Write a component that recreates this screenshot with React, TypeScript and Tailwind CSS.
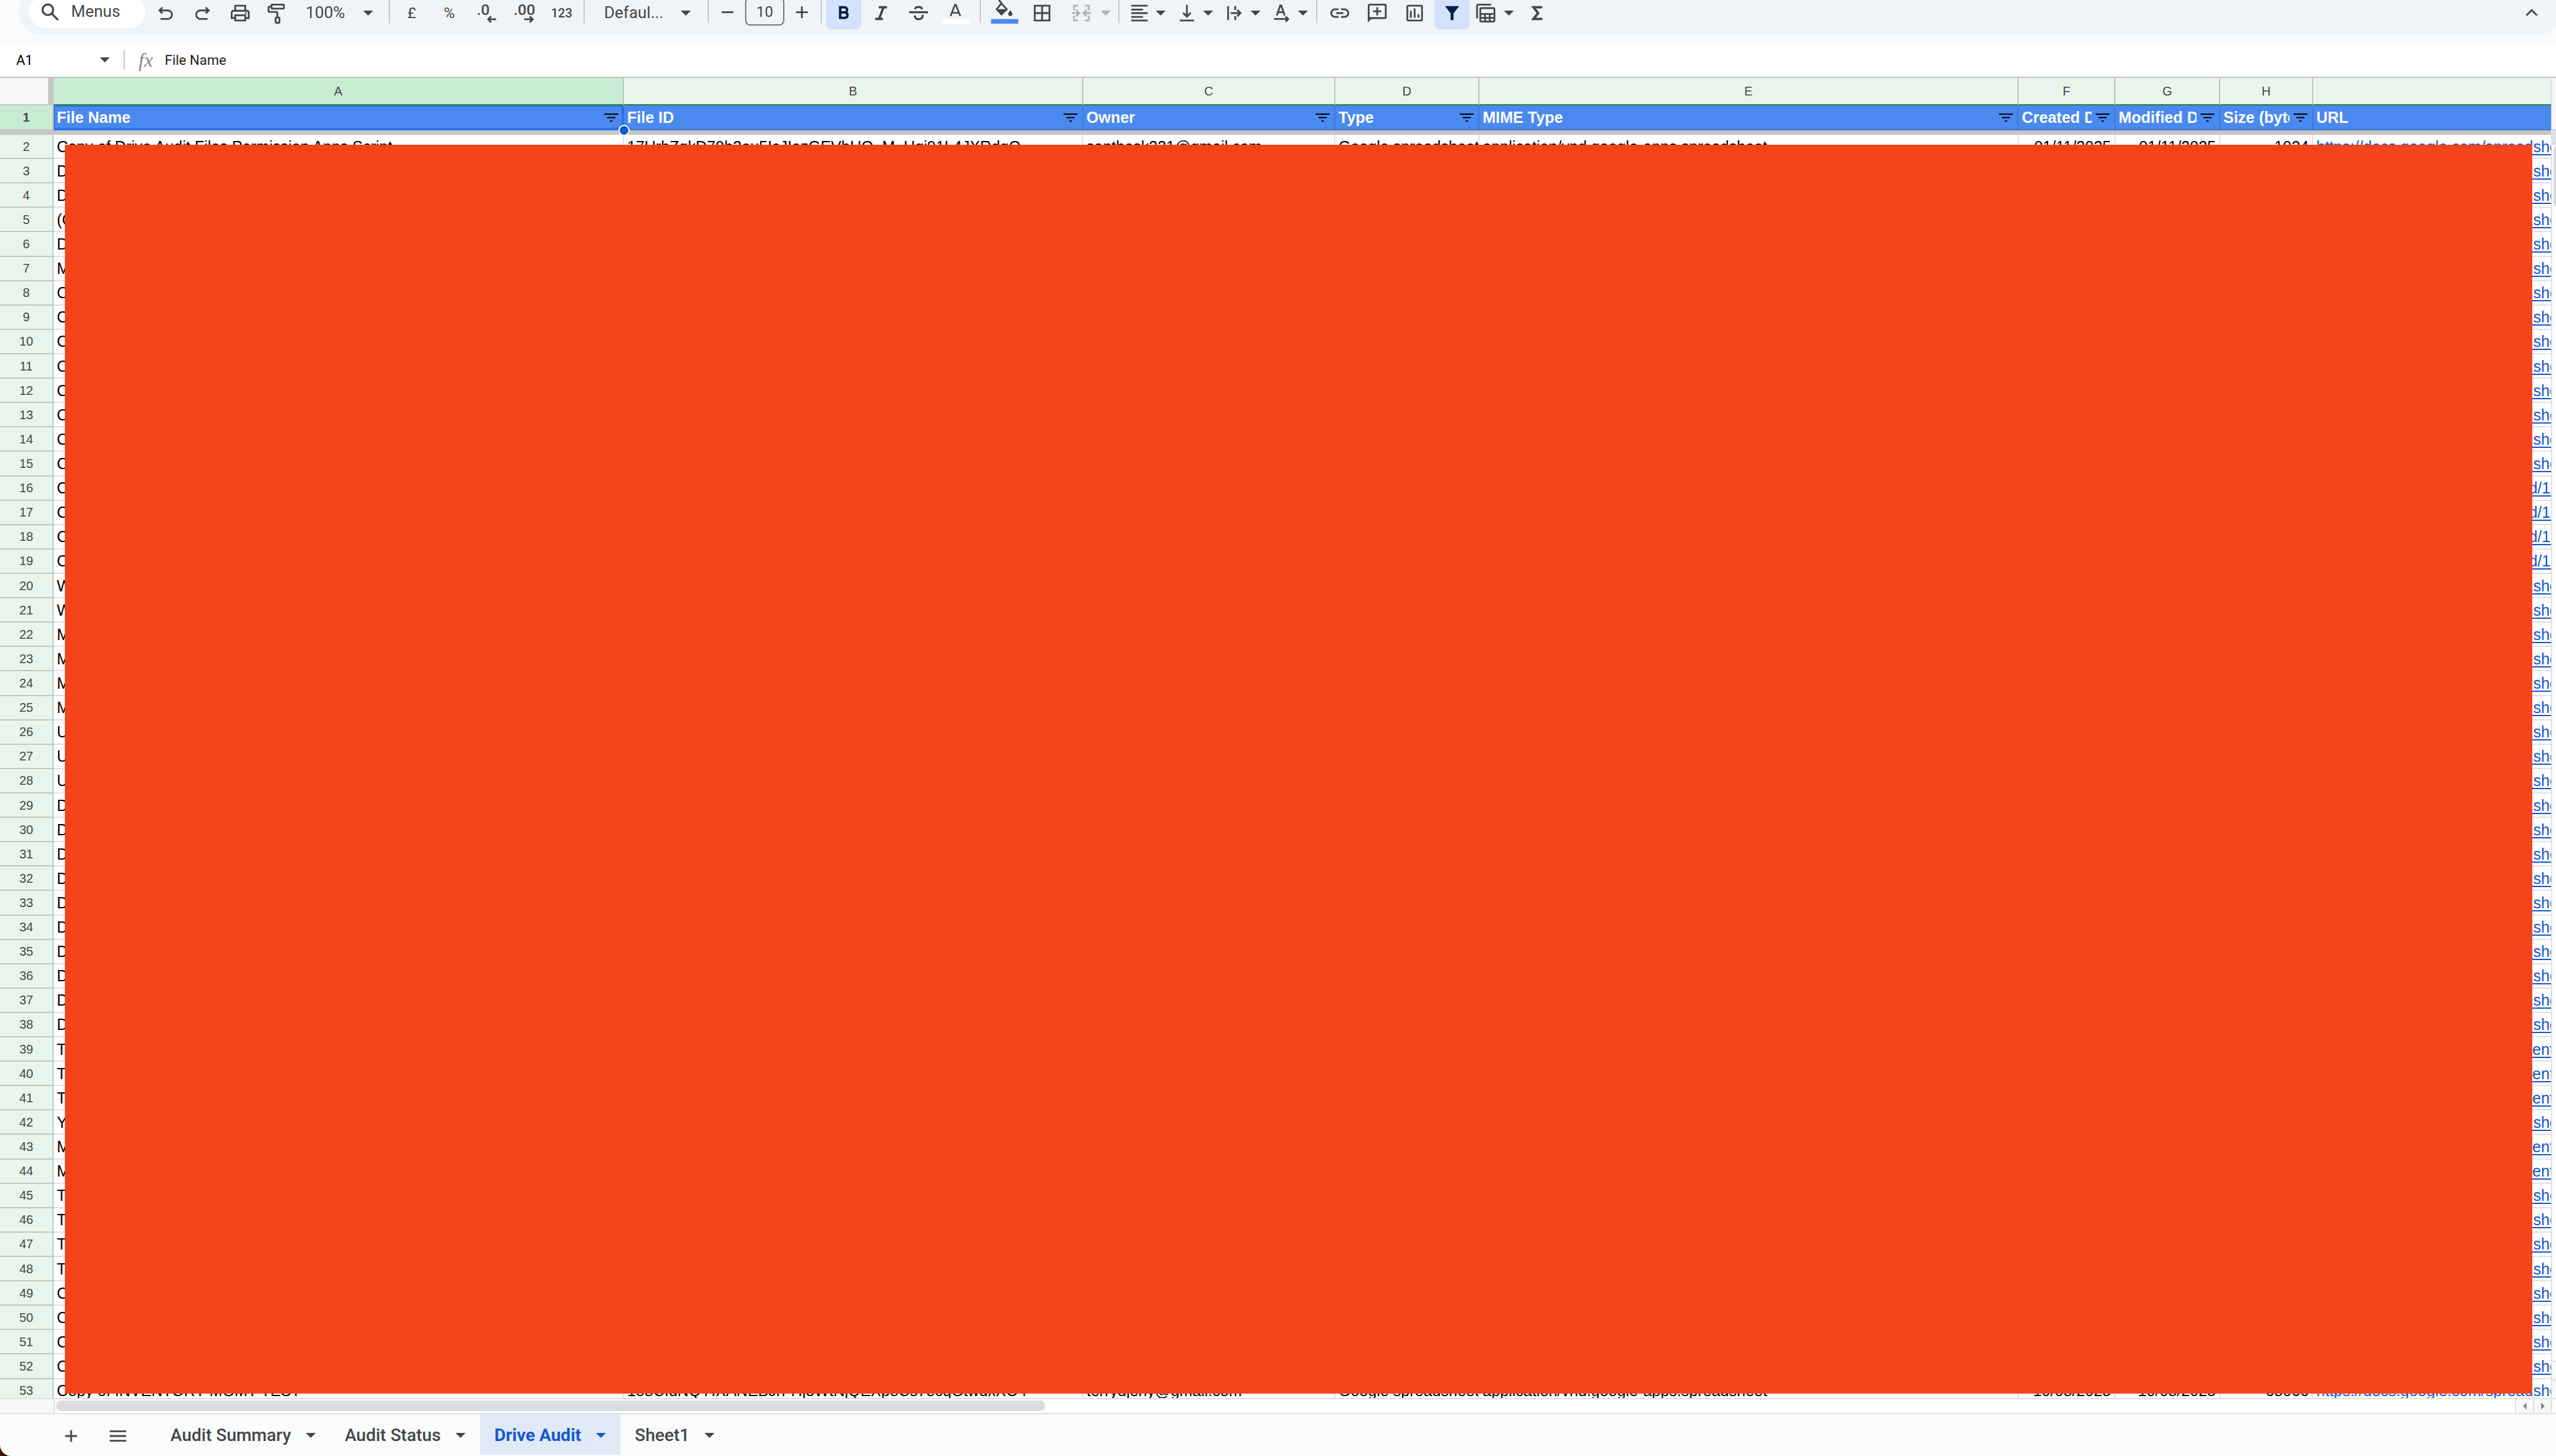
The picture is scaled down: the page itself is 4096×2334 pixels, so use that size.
import clsx from "clsx";
import type { ReactNode } from "react";

const COLUMNS = [
  { letter: "A", title: "File Name", width: "w-[914px]" },
  { letter: "B", title: "File ID", width: "w-[736px]" },
  { letter: "C", title: "Owner", width: "w-[404px]" },
  { letter: "D", title: "Type", width: "w-[231px]" },
  { letter: "E", title: "MIME Type", width: "w-[864px]" },
  { letter: "F", title: "Created Date", width: "w-[155px]" },
  { letter: "G", title: "Modified Date", width: "w-[168px]" },
  { letter: "H", title: "Size (bytes)", width: "w-[149px]" },
  { letter: "", title: "URL", width: "" },
];

const SHEET_URL = "https://docs.google.com/spreadsheets/d/1";
const DOC_URL = "https://docs.google.com/document/d/1";
const FORM_URL = "https://docs.google.com/forms/d/1s";

// rows 3 to 52, the covered part of the sheet
const NAMES = [
  "D", "D", "(C", "D", "M", "C", "C", "C", "C", "C", "C", "C", "C", "C", "C",
  "C", "C", "W", "W", "M", "M", "M", "M", "U", "U", "U", "D", "D", "D", "D",
  "D", "D", "D", "D", "D", "D", "T", "T", "T", "Y", "M", "M", "T", "T", "T",
  "T", "C", "C", "C", "C",
];

const DOC_ROWS = [39, 40, 41, 43, 44];

function urlFor(row: number) {
  if (row >= 16 && row <= 19) return FORM_URL;
  return DOC_ROWS.includes(row) ? DOC_URL : SHEET_URL;
}

const ROWS: string[][] = [
  [
    "Copy of Drive Audit Files Permission Apps Script",
    "17UrbZqkD79b2ou5IcJIezGEVbUQ_M_Uqi91L4JXRdgQ",
    "santhosk221@gmail.com",
    "Google spreadsheet",
    "application/vnd.google-apps.spreadsheet",
    "01/11/2025",
    "01/11/2025",
    "1024",
    SHEET_URL,
  ],
  ...NAMES.map((name, i) => [name, "", "", "", "", "", "", "", urlFor(i + 3)]),
  [
    "Copy of INVENTORY MGMT TEST",
    "1o8CIdNQYIXANEBJrFHj3WtNjQEXp8Cs7ecqGtwdxXO4",
    "terrydjeny@gmail.com",
    "Google spreadsheet",
    "application/vnd.google-apps.spreadsheet",
    "10/08/2025",
    "10/08/2025",
    "68066",
    SHEET_URL,
  ],
];

function Icon({ children, width = 3 }: { children: ReactNode; width?: number }) {
  return (
    <svg
      viewBox="0 0 36 36"
      className="size-[34px] shrink-0 overflow-visible"
      fill="none"
      stroke="currentColor"
      strokeWidth={width}
    >
      {children}
    </svg>
  );
}

function Caret() {
  return (
    <svg viewBox="0 0 16 8" className="h-2 w-4 shrink-0" fill="currentColor">
      <path d="M0 0h16L8 8z" />
    </svg>
  );
}

function Divider({ className = "mx-[5px]" }: { className?: string }) {
  return <span className={clsx("mb-1 h-[37px] w-[2px] shrink-0 bg-[#c7c7c7]", className)} />;
}

function Tool({ label, active, children }: { label: string; active?: boolean; children: ReactNode }) {
  return (
    <button
      aria-label={label}
      className={clsx(
        "mx-[2px] flex h-[52px] w-14 shrink-0 items-center justify-center rounded-lg",
        active && "bg-[#d3e3fd] text-[#041e49]",
      )}
    >
      {children}
    </button>
  );
}

function DropTool({ label, className, children }: { label: string; className?: string; children: ReactNode }) {
  return (
    <button
      aria-label={label}
      className={clsx("flex h-[52px] shrink-0 items-center pr-[7px] pl-[10px]", className ?? "gap-[9px]")}
    >
      {children}
      <Caret />
    </button>
  );
}

function Toolbar() {
  return (
    <div className="-mt-[18px] -mr-2 mb-[15px] ml-[30px] flex h-[74px] shrink-0 items-center rounded-[37px] bg-[#f0f4f9] pt-[3px] pl-[17px] text-2xl">
      <button className="mr-[2px] mb-1 flex h-[52px] w-[186px] items-center gap-[17px] rounded-full bg-white pl-4 text-[26px]">
        <Icon width={3.4}>
          <circle cx="14.5" cy="14.5" r="9" />
          <path d="m21 21 11 11" />
        </Icon>
        Menus
      </button>

      <Tool label="Undo">
        <Icon>
          <path d="M13 8.5 8 13.5l5 5M8 13.5h14a7 7 0 0 1 0 14.5H10" />
        </Icon>
      </Tool>
      <Tool label="Redo">
        <Icon>
          <path d="m23 8.5 5 5-5 5M28 13.5H14a7 7 0 0 0 0 14.5h12" />
        </Icon>
      </Tool>
      <Tool label="Print">
        <Icon>
          <path d="M9.5 13V5.5h17V13M9 26.5H3.5V17a3 3 0 0 1 3-3h23a3 3 0 0 1 3 3v9.5H27M9.5 21.5h17v9h-17z" />
          <circle cx="27.5" cy="18" r="1.6" fill="currentColor" stroke="none" />
        </Icon>
      </Tool>
      <Tool label="Paint format">
        <Icon>
          <rect x="7.5" y="3.5" width="21" height="7" rx="1" />
          <path d="M7.5 7h-3a2 2 0 0 0-2 2v5a2 2 0 0 0 2 2h11a2 2 0 0 1 2 2v7" />
          <rect x="14.5" y="25.5" width="6.5" height="9" rx="1" />
        </Icon>
      </Tool>
      <button className="flex h-[52px] w-[143px] shrink-0 items-center justify-between pr-5 pl-[15px] text-[26px]">
        100%
        <Caret />
      </button>

      <Divider />
      <Tool label="Format as currency">£</Tool>
      <Tool label="Format as percent">%</Tool>
      <Tool label="Decrease decimal places">
        <Icon>
          <text x="1" y="21" fill="currentColor" stroke="none" className="text-[26px] font-medium">
            .0
          </text>
          <path d="M34 28.5H21M25.5 23.5l-5 5 5 5" />
        </Icon>
      </Tool>
      <Tool label="Increase decimal places">
        <Icon>
          <text x="0" y="21" fill="currentColor" stroke="none" className="text-[26px] font-medium">
            .00
          </text>
          <path d="M18 28.5h14M27.5 23.5l5 5-5 5" />
        </Icon>
      </Tool>
      <Tool label="More formats">
        <span className="text-xl font-medium">123</span>
      </Tool>

      <Divider />
      <button className="flex h-[52px] w-[187px] shrink-0 items-center justify-between pr-[22px] pl-[26px] text-[26px]">
        Defaul...
        <Caret />
      </button>

      <Divider />
      <div className="flex items-center px-px">
        <button aria-label="Decrease font size" className="flex w-12 justify-center">
          <Icon>
            <path d="M8 16.5h20" />
          </Icon>
        </button>
        <input
          aria-label="Font size"
          defaultValue="10"
          className="mx-1 mb-1 h-[45px] w-[63px] rounded-lg border-2 border-[#747775] bg-transparent text-center"
        />
        <button aria-label="Increase font size" className="flex w-12 justify-center">
          <Icon>
            <path d="M8 16.5h20M18 6.5v20" />
          </Icon>
        </button>
      </div>

      <Divider />
      <Tool label="Bold" active>
        <Icon width={4}>
          <path d="M12 8h7.5a4.3 4.3 0 0 1 0 8.7H12zM12 16.7h8.5a4.7 4.7 0 0 1 0 9.3H12z" />
        </Icon>
      </Tool>
      <Tool label="Italic">
        <Icon width={4}>
          <path d="M14 8h14M8 28h13M22 8l-7.5 20" />
        </Icon>
      </Tool>
      <Tool label="Strikethrough">
        <Icon width={3.6}>
          <path d="M2 16.5h32M12 11.5c.5-2.7 3-4 6-4s5.500 1.300 6 4M11.500 22c.3 4 3 6.400 6.600 6.400s6.700-2 6.700-5.400c0-.8-.1-1.400-.4-2" />
        </Icon>
      </Tool>
      <Tool label="Text colour">
        <Icon width={2.8}>
          <path d="m8.800 23 7.400-19h1.600l7.400 19M11.500 17.500h11" />
          <path d="M-5 28h46v8H-5z" fill="#fff" stroke="none" />
        </Icon>
      </Tool>

      <Divider className="mx-2" />
      <Tool label="Fill colour">
        <Icon>
          <path d="M8-4l5 5M12.500 1.500 4.500 11.500l8 8.500 9-8.500z" />
          <path d="M3.500 11.500h19l-10 10z" fill="currentColor" stroke="none" />
          <path d="M27.500 13c2 3 3.500 4.500 3.500 6.500a3.500 3.500 0 0 1-7 0c0-2 1.500-3.500 3.500-6.500z" fill="currentColor" stroke="none" />
          <path d="M-5 28h46v8H-5z" fill="#4a89f0" stroke="none" />
        </Icon>
      </Tool>
      <Tool label="Borders">
        <Icon>
          <path d="M5.500 5.500h25v25h-25zM18 5v26M5 18h26" />
        </Icon>
      </Tool>
      <DropTool label="Merge cells" className="ml-[6px] gap-[14px] text-[#b0b3b6]">
        <Icon>
          <path d="M12 5.500H5.500v8M24 5.500h6.500v8M5.500 22.500v8H12M30.500 22.500v8H24M2 18h11M9 12.500l5.500 5.500L9 23.500M34 18H23M27 12.500 21.500 18l5.500 5.500" />
        </Icon>
      </DropTool>

      <Divider />
      <DropTool label="Horizontal align">
        <Icon>
          <path d="M4 5.500h28M4 12h20M4 18h28M4 24.500h20M4 30.500h28" />
        </Icon>
      </DropTool>
      <DropTool label="Vertical align">
        <Icon>
          <path d="M18 4v20M11.500 17.500 18 24l6.500-6.500M6 30.500h24" />
        </Icon>
      </DropTool>
      <DropTool label="Text wrapping">
        <Icon>
          <path d="M7.500 6v24M19.500 6v7M19.500 23v7M12 18h15M23 12.500l5.500 5.500-5.500 5.500" />
        </Icon>
      </DropTool>
      <DropTool label="Text rotation">
        <Icon>
          <path d="M9.500 22 15.500 5h1.600l6 17M12 16.500h9M5 28h23M24.500 23.500 29 28l-4.500 4.500" />
        </Icon>
      </DropTool>

      <Divider className="mx-[6px]" />
      <Tool label="Insert link">
        <Icon>
          <path d="M16 11.500H10a6.500 6.500 0 0 0 0 13h6M20 11.500h6a6.500 6.500 0 0 1 0 13h-6M12 18h12" />
        </Icon>
      </Tool>
      <Tool label="Insert comment">
        <Icon>
          <path d="M3.500 27V5.500a2 2 0 0 1 2-2h25a2 2 0 0 1 2 2v19a2 2 0 0 1-2 2h-27M18 8v14M11 15h14" />
          <path d="M2 26h8l-8 8z" fill="currentColor" stroke="none" />
        </Icon>
      </Tool>
      <Tool label="Insert chart">
        <Icon>
          <rect x="5.5" y="5.5" width="25" height="25" rx="2" />
          <path d="M11.500 14v12M18 10v16M24.500 20v6" />
        </Icon>
      </Tool>
      <Tool label="Remove filter" active>
        <Icon>
          <path d="M6 6h24l-9.500 12.500V30h-5V18.500z" fill="currentColor" stroke="none" />
        </Icon>
      </Tool>
      <DropTool label="Table views">
        <Icon>
          <path d="M0 27V5.500a2 2 0 0 1 2-2h22M5.500 19.500h24M5.500 26h24M13.500 19.500v13M21.500 19.500v13" />
          <rect x="5.5" y="9.5" width="24" height="23" rx="2" />
        </Icon>
      </DropTool>
      <Tool label="Functions">
        <Icon width={4}>
          <path d="M27 8H12l8 10-8 10h15" />
        </Icon>
      </Tool>

      <button aria-label="Hide the menus" className="mr-[30px] ml-auto">
        <Icon>
          <path d="m9 22 9-9 9 9" />
        </Icon>
      </button>
    </div>
  );
}

function FormulaBar() {
  return (
    <div className="flex h-[54px] shrink-0 items-center border-b-2 border-[#c4c4c4] bg-white pb-[2px] text-[22px] text-[#1f1f1f]">
      <input aria-label="Name box" defaultValue="A1" className="w-[138px] pl-[26px] text-black" />
      <button aria-label="Named ranges" className="flex w-[60px] justify-center text-[#444746]">
        <Caret />
      </button>
      <span className="h-8 w-[2px] bg-[#c7c7c7]" />
      <label
        htmlFor="formula"
        className="w-[64px] pl-[22px] font-['Liberation_Serif'] text-[32px] leading-8 text-[#858585] italic"
      >
        fx
      </label>
      <input id="formula" defaultValue="File Name" className="min-w-0 flex-1" />
    </div>
  );
}

function FilterButton({ label }: { label: string }) {
  return (
    <button aria-label={`Filter ${label}`} className="shrink-0">
      <svg viewBox="0 0 24 14" className="h-[13px] w-[23px]" stroke="#000" strokeWidth="2.2">
        <path d="M0 1h24M5 7h14M10 13h4" />
      </svg>
    </button>
  );
}

function Sheet() {
  return (
    <div className="relative min-h-0 flex-1 overflow-hidden font-['Liberation_Sans'] text-[25px] leading-7">
      <table className="h-[calc(100%+9px)] w-full table-fixed border-separate border-spacing-0 bg-white">
        <colgroup>
          <col className="w-[86px]" />
          {COLUMNS.map(({ title, width }) => (
            <col key={title} className={width} />
          ))}
        </colgroup>
        <thead>
          <tr className="h-11 text-xl text-[#444746]">
            <th className="border-r-[9px] border-b-2 border-[#c6c6c6] bg-[#f8f9fa] p-0" />
            {COLUMNS.map(({ letter, title }) => (
              <th
                key={title}
                className={clsx(
                  "border-r-2 border-b-2 border-r-[#c0c4c2] border-b-[#2c7f43] p-0 font-normal last:border-r-0",
                  letter === "A" ? "bg-[#c7ecd2]" : "bg-[#e8f5ec]",
                )}
              >
                {letter}
              </th>
            ))}
          </tr>
          <tr className="h-10 text-left text-white">
            <th className="border-r-2 border-b-2 border-[#c6c6c6] bg-[#c7ecd2] p-0 text-center text-xl text-[#444746]">
              1
            </th>
            {COLUMNS.map(({ letter, title }) => (
              <th
                key={title}
                className={clsx(
                  "overflow-hidden border-r-2 border-b-2 bg-[#4a89f0] py-0 pr-[7px] pl-[5px] last:border-r-0",
                  letter === "A"
                    ? "border-[#2674e6] shadow-[inset_0_0_0_2px_#2674e6]"
                    : "border-[#4478d0]",
                )}
              >
                <div className="flex items-center justify-between gap-[6px]">
                  <span className="overflow-hidden whitespace-nowrap">{title}</span>
                  {letter && <FilterButton label={title} />}
                </div>
              </th>
            ))}
          </tr>
          <tr className="h-[7px]">
            <td colSpan={10} className="bg-[#c6c6c6] p-0" />
          </tr>
        </thead>
        <tbody>
          {ROWS.map((cells, row) => (
            <tr key={row} className="text-black">
              <th className="border-r-2 border-b-2 border-[#c4c7c5] bg-[#e8f5ec] p-0 text-xl font-normal text-[#444746]">
                {row + 2}
              </th>
              {cells.map((cell, col) => (
                <td
                  key={col}
                  className={clsx(
                    "overflow-hidden border-r-2 border-b-2 border-[#e1e1e1] px-[5px] py-0 whitespace-nowrap last:border-r-0",
                    col >= 5 && col <= 7 && "text-right",
                  )}
                >
                  {col === 8 ? (
                    <a href="#" className="text-[#1155cc] underline decoration-2 underline-offset-3">
                      {cell}
                    </a>
                  ) : (
                    cell
                  )}
                </td>
              ))}
            </tr>
          ))}
        </tbody>
      </table>

      <span className="absolute top-[75px] left-[991px] size-[18px] rounded-full border-2 border-white bg-[#1558d0]" />
      <div className="absolute top-[107px] right-[30px] bottom-[7px] left-[104px] bg-[#f5441a]" />
    </div>
  );
}

function VerticalScroll() {
  return (
    <div className="flex w-2 shrink-0 flex-col overflow-hidden border-l-2 border-[#e1e1e1] bg-white">
      <div className="h-[82px] bg-[#f8f8f8]" />
      <div className="h-[25px] border-y-2 border-[#d4d4d4] bg-[#dde1ea]" />
      <div className="ml-[2px] h-[101px] w-4 rounded-full bg-[#dadce0]" />
      <div className="mt-auto h-[30px] border-t-2 border-[#e1e1e1] bg-[#f8f8f8]" />
      <div className="h-[30px] border-t-2 border-[#e1e1e1] bg-[#f8f8f8]" />
    </div>
  );
}

function HorizontalScroll() {
  return (
    <div className="flex h-[26px] shrink-0 border-y-2 border-[#e1e3e1] bg-white">
      <div className="w-[88px] border-r-2 border-[#e1e1e1] bg-[#f8f8f8]" />
      <div className="flex-1 px-[2px] pt-[2px]">
        <div className="h-[17px] w-[calc(40%+10px)] rounded-full bg-[#dadce0]" />
      </div>
      <button
        aria-label="Scroll left"
        className="flex w-[29px] items-center justify-center border-l-2 border-[#e1e1e1] bg-[#f8f8f8]"
      >
        <svg viewBox="0 0 6 12" className="h-3 w-[6px]" fill="#8a8a8a">
          <path d="M6 0v12L0 6z" />
        </svg>
      </button>
      <button
        aria-label="Scroll right"
        className="mr-[6px] flex w-[31px] items-center justify-center border-x-2 border-[#e1e1e1] bg-[#f8f8f8]"
      >
        <svg viewBox="0 0 6 12" className="h-3 w-[6px]" fill="#8a8a8a">
          <path d="M0 0v12l6-6z" />
        </svg>
      </button>
    </div>
  );
}

function SheetTabs() {
  return (
    <nav className="flex h-[67px] shrink-0 items-stretch pl-[84px] text-[28px] font-medium">
      <button aria-label="Add sheet" className="flex w-[60px] items-center justify-center pt-[2px]">
        <Icon>
          <path d="M8 18h20M18 8v20" />
        </Icon>
      </button>
      <button aria-label="All sheets" className="mr-[16px] flex w-[90px] items-center justify-center pt-[2px]">
        <Icon>
          <path d="M4 10h28M4 18h28M4 26h28" />
        </Icon>
      </button>
      {["Audit Summary", "Audit Status", "Drive Audit", "Sheet1"].map((name) => (
        <button
          key={name}
          className={clsx(
            "mb-[2px] flex items-center gap-6 px-[23px] pt-[2px]",
            name === "Drive Audit" && "bg-[#e1e9f7] font-bold text-[#1558d0]",
          )}
        >
          {name}
          <Caret />
        </button>
      ))}
    </nav>
  );
}

export default function App() {
  return (
    <div className="h-screen bg-[#3a1a0c] font-[Roboto,sans-serif] text-[#444746]">
      <div className="flex h-full flex-col overflow-hidden rounded-bl-[18px] bg-[#f9fbfd]">
        <Toolbar />
        <FormulaBar />
        <div className="flex min-h-0 flex-1">
          <Sheet />
          <VerticalScroll />
        </div>
        <HorizontalScroll />
        <SheetTabs />
      </div>
    </div>
  );
}
